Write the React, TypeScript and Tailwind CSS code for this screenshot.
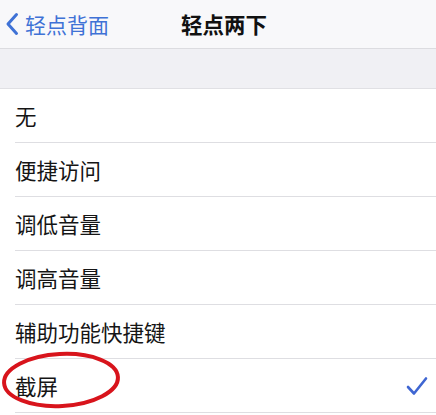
const options = ['无', '便捷访问', '调低音量', '调高音量', '辅助功能快捷键', '截屏']

export default function App() {
  return (
    <div
      className="relative w-[436px] h-[415px] overflow-hidden bg-white"
      style={{ fontFamily: '"Noto Sans CJK SC", "Noto Sans", sans-serif' }}
    >
      {/* nav bar */}
      <div className="relative h-[49px] flex items-center justify-center bg-[#f8f8fa] border-b border-[#dcdce0]">
        <div className="absolute left-[5px] top-0 h-full flex items-center text-[#3f72d6]">
          <svg width="14" height="24" viewBox="0 0 14 24" className="mr-[6px]">
            <path d="M11.5 2.5 L3 12 L11.5 21.5" fill="none" stroke="currentColor" strokeWidth="3" strokeLinecap="round" strokeLinejoin="round" />
          </svg>
          <span className="text-[21px] leading-none">轻点背面</span>
        </div>
        <span className="text-[21.5px] font-semibold leading-none text-[#111] ml-[12px]">轻点两下</span>
      </div>

      {/* grey spacer */}
      <div className="h-[40px] bg-[#f0f0f4] border-b border-[#e0e0e4]" />

      <ul>
        {options.map((label, i) => (
          <li key={label} className="pl-[15px]">
            <div className="h-[54px] flex items-center justify-between pr-[7px] border-b border-[#dedee2]">
              <span className="text-[21.5px] leading-none text-[#151515]">{label}</span>
              {i === options.length - 1 && (
                <svg width="24" height="20" viewBox="0 0 24 20">
                  <path d="M3 11 L9 17.5 L21 2.5" fill="none" stroke="#3f66d2" strokeWidth="2.6" strokeLinecap="round" strokeLinejoin="round" />
                </svg>
              )}
            </div>
          </li>
        ))}
      </ul>

      {/* red annotation circle */}
      <svg className="absolute left-0 top-[347px]" width="124" height="66" viewBox="0 0 124 66">
        <ellipse cx="61" cy="33" rx="57" ry="26" fill="none" stroke="#d8141c" strokeWidth="4" transform="rotate(-3 61 33)" />
      </svg>
    </div>
  )
}
